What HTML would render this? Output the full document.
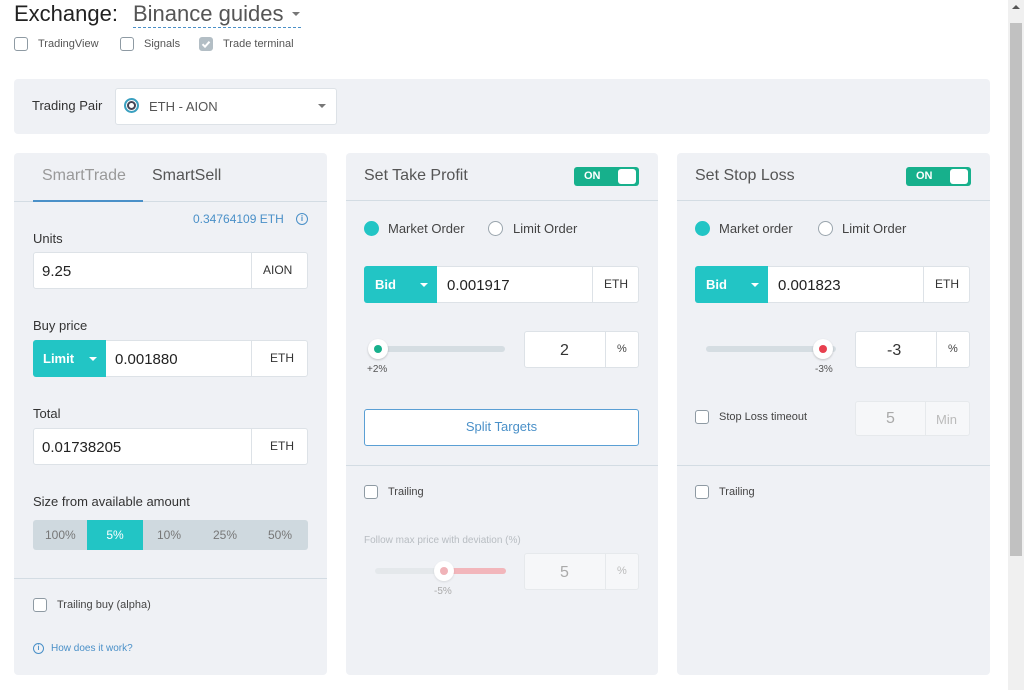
<!DOCTYPE html>
<html><head><meta charset="utf-8"><style>
*{box-sizing:border-box;margin:0;padding:0}
body{width:1024px;height:690px;background:#fff;font-family:"Liberation Sans",sans-serif;color:#444;position:relative;overflow:hidden}
.a{position:absolute}
.panel{position:absolute;background:#eff1f5;border-radius:4px}
.sep{position:absolute;height:1px;background:#d3dce3}
.inp{position:absolute;background:#fff;border:1px solid #dde2e7;border-radius:3px}
.dv{position:absolute;top:0;bottom:0;width:1px;background:#dde2e7}
.t{position:absolute;white-space:nowrap}
.cb{position:absolute;width:14px;height:14px;border:1px solid #8e9aa3;border-radius:3px;background:#fff}
.rf{position:absolute;width:15px;height:15px;border-radius:50%;background:#22c5c5}
.re{position:absolute;width:15px;height:15px;border-radius:50%;border:1px solid #9aa5ad;background:#fff}
.teal{position:absolute;background:#22c5c5;border-radius:3px 0 0 3px;color:#fff;font-size:13px;font-weight:bold}
.car{position:absolute;width:0;height:0;border-left:4px solid transparent;border-right:4px solid transparent;border-top:4px solid #fff}
.tog{position:absolute;width:65px;height:19px;background:#17b08c;border-radius:3px}
.tog span{position:absolute;left:10px;top:3px;color:#fff;font-size:11px;font-weight:bold}
.tog i{position:absolute;right:3px;top:2px;width:18px;height:15px;background:#fff;border-radius:3px}
.v{top:10px!important}
</style></head><body>

<div class="t" style="left:14px;top:1px;font-size:22px;color:#222">Exchange:</div>
<div class="t" style="left:133px;top:1px;font-size:22px;color:#555">Binance guides</div>
<div class="car" style="left:292px;top:12px;border-top-color:#777"></div>
<div class="a" style="left:133px;top:27px;width:168px;border-top:1px dashed #4a90c8"></div>

<div class="cb" style="left:14px;top:37px"></div><div class="t" style="left:38px;top:38px;font-size:11px;color:#555">TradingView</div>
<div class="cb" style="left:120px;top:37px"></div><div class="t" style="left:144px;top:38px;font-size:11px;color:#555">Signals</div>
<div class="cb" style="left:199px;top:37px;background:#b3bec5;border-color:#b3bec5"><svg width="14" height="14" style="position:absolute;left:-1px;top:-1px"><path d="M3.5 7.2l2.5 2.5 4.5-5" stroke="#fff" stroke-width="2" fill="none"/></svg></div>
<div class="t" style="left:223px;top:38px;font-size:11px;color:#555">Trade terminal</div>

<div class="panel" style="left:14px;top:79px;width:976px;height:55px"></div>
<div class="t" style="left:32px;top:98px;font-size:13px;color:#333">Trading Pair</div>
<div class="inp" style="left:115px;top:88px;width:222px;height:37px"></div>
<div class="a" style="left:124px;top:98px;width:15px;height:15px;border-radius:50%;border:2px solid #3aa0c0;box-shadow:inset 0 0 0 1px #fff,inset 0 0 0 3px #445"></div>
<div class="t" style="left:149px;top:99px;font-size:13px;color:#555">ETH - AION</div>
<div class="car" style="left:318px;top:104px;border-top-color:#777"></div>

<!-- LEFT -->
<div class="panel" style="left:14px;top:153px;width:313px;height:522px"></div>
<div class="t" style="left:42px;top:167px;font-size:16px;color:#999">SmartTrade</div>
<div class="t" style="left:152px;top:167px;font-size:16px;color:#555">SmartSell</div>
<div class="sep" style="left:14px;top:201px;width:313px"></div>
<div class="a" style="left:33px;top:200px;width:110px;height:2px;background:#4a90c8"></div>
<div class="t" style="left:193px;top:212px;font-size:12px;color:#4a90c8">0.34764109 ETH</div>
<div class="a" style="left:296px;top:213px;width:12px;height:12px;border:1.3px solid #4a90c8;border-radius:50%;font-size:8px;color:#4a90c8;text-align:center;line-height:10px;font-weight:bold">i</div>
<div class="t" style="left:33px;top:231px;font-size:13px;color:#333">Units</div>
<div class="inp" style="left:33px;top:252px;width:275px;height:37px"><div class="dv" style="left:217px"></div>
<div class="t v" style="left:8px;font-size:15px;color:#222">9.25</div><div class="t" style="left:229px;top:10px;font-size:12px;color:#333">AION</div></div>

<div class="t" style="left:33px;top:318px;font-size:13px;color:#333">Buy price</div>
<div class="inp" style="left:33px;top:340px;width:275px;height:37px"><div class="dv" style="left:217px"></div>
<div class="t v" style="left:81px;font-size:15px;color:#222">0.001880</div><div class="t" style="left:236px;top:10px;font-size:12px;color:#333">ETH</div></div>
<div class="teal" style="left:33px;top:340px;width:73px;height:37px"><span class="t" style="left:10px;top:11px">Limit</span><div class="car" style="left:56px;top:17px"></div></div>

<div class="t" style="left:33px;top:406px;font-size:13px;color:#333">Total</div>
<div class="inp" style="left:33px;top:428px;width:275px;height:37px"><div class="dv" style="left:217px"></div>
<div class="t v" style="left:8px;font-size:15px;color:#222">0.01738205</div><div class="t" style="left:236px;top:10px;font-size:12px;color:#333">ETH</div></div>

<div class="t" style="left:33px;top:494px;font-size:13px;color:#333">Size from available amount</div>
<div class="a" style="left:33px;top:520px;width:275px;height:30px;background:#cfd9df;border-radius:3px;font-size:12px;color:#777">
<span class="t" style="left:12px;top:8px">100%</span>
<span class="a" style="left:54px;top:0;width:56px;height:30px;background:#22c5c5;color:#fff;text-align:center;line-height:30px">5%</span>
<span class="t" style="left:124px;top:8px">10%</span><span class="t" style="left:180px;top:8px">25%</span><span class="t" style="left:235px;top:8px">50%</span></div>
<div class="sep" style="left:14px;top:578px;width:313px"></div>
<div class="cb" style="left:33px;top:598px"></div><div class="t" style="left:57px;top:599px;font-size:11px;color:#444">Trailing buy (alpha)</div>
<div class="a" style="left:33px;top:643px;width:11px;height:11px;border:1.2px solid #4a90c8;border-radius:50%;font-size:7px;color:#4a90c8;text-align:center;line-height:9px;font-weight:bold">i</div>
<div class="t" style="left:51px;top:643px;font-size:10px;color:#4a90c8">How does it work?</div>

<!-- MIDDLE -->
<div class="panel" style="left:346px;top:153px;width:312px;height:522px"></div>
<div class="t" style="left:364px;top:167px;font-size:16px;color:#555">Set Take Profit</div>
<div class="tog" style="left:574px;top:167px"><span>ON</span><i></i></div>
<div class="sep" style="left:346px;top:200px;width:312px"></div>
<div class="rf" style="left:364px;top:221px"></div><div class="t" style="left:388px;top:221px;font-size:13px;color:#444">Market Order</div>
<div class="re" style="left:488px;top:221px"></div><div class="t" style="left:513px;top:221px;font-size:13px;color:#444">Limit Order</div>
<div class="inp" style="left:364px;top:266px;width:275px;height:37px"><div class="dv" style="left:227px"></div>
<div class="t v" style="left:82px;font-size:15px;color:#222">0.001917</div><div class="t" style="left:239px;top:10px;font-size:12px;color:#333">ETH</div></div>
<div class="teal" style="left:364px;top:266px;width:73px;height:37px"><span class="t" style="left:11px;top:11px">Bid</span><div class="car" style="left:56px;top:17px"></div></div>
<div class="a" style="left:372px;top:346px;width:133px;height:6px;border-radius:3px;background:#d5dde2"></div>
<div class="a" style="left:368px;top:339px;width:20px;height:20px;border-radius:50%;background:#fff;box-shadow:0 1px 2px rgba(0,0,0,.2)"><i class="a" style="left:6px;top:6px;width:8px;height:8px;border-radius:50%;background:#17b08c"></i></div>
<div class="t" style="left:367px;top:364px;font-size:10px;color:#555">+2%</div>
<div class="inp" style="left:524px;top:331px;width:115px;height:37px"><div class="dv" style="left:80px"></div>
<div class="t v" style="left:35px;font-size:16px;color:#333">2</div><div class="t" style="left:92px;top:11px;font-size:11px;color:#444">%</div></div>
<div class="a" style="left:364px;top:409px;width:275px;height:37px;border:1.5px solid #5a9fd4;border-radius:3px;background:#fff;color:#4a90c8;font-size:13px;text-align:center;line-height:34px">Split Targets</div>
<div class="sep" style="left:346px;top:465px;width:312px"></div>
<div class="cb" style="left:364px;top:485px"></div><div class="t" style="left:388px;top:486px;font-size:11px;color:#444">Trailing</div>
<div class="t" style="left:364px;top:535px;font-size:10px;color:#b8bdc2">Follow max price with deviation (%)</div>
<div class="a" style="left:375px;top:568px;width:70px;height:6px;border-radius:3px;background:#e4e8eb"></div>
<div class="a" style="left:444px;top:568px;width:62px;height:6px;border-radius:3px;background:#f2b6bb"></div>
<div class="a" style="left:434px;top:561px;width:20px;height:20px;border-radius:50%;background:#fff;box-shadow:0 1px 2px rgba(0,0,0,.1)"><i class="a" style="left:6px;top:6px;width:8px;height:8px;border-radius:50%;background:#f0b3b8"></i></div>
<div class="t" style="left:434px;top:586px;font-size:10px;color:#aaa">-5%</div>
<div class="inp" style="left:524px;top:553px;width:115px;height:37px;background:#f6f7f9;border-color:#e6e9ec"><div class="dv" style="left:80px;background:#e6e9ec"></div>
<div class="t v" style="left:35px;font-size:16px;color:#aaa">5</div><div class="t" style="left:92px;top:11px;font-size:11px;color:#bbb">%</div></div>

<!-- RIGHT -->
<div class="panel" style="left:677px;top:153px;width:313px;height:522px"></div>
<div class="t" style="left:695px;top:167px;font-size:16px;color:#555">Set Stop Loss</div>
<div class="tog" style="left:906px;top:167px"><span>ON</span><i></i></div>
<div class="sep" style="left:677px;top:200px;width:313px"></div>
<div class="rf" style="left:695px;top:221px"></div><div class="t" style="left:719px;top:221px;font-size:13px;color:#444">Market order</div>
<div class="re" style="left:818px;top:221px"></div><div class="t" style="left:842px;top:221px;font-size:13px;color:#444">Limit Order</div>
<div class="inp" style="left:695px;top:266px;width:275px;height:37px"><div class="dv" style="left:227px"></div>
<div class="t v" style="left:82px;font-size:15px;color:#222">0.001823</div><div class="t" style="left:239px;top:10px;font-size:12px;color:#333">ETH</div></div>
<div class="teal" style="left:695px;top:266px;width:73px;height:37px"><span class="t" style="left:11px;top:11px">Bid</span><div class="car" style="left:56px;top:17px"></div></div>
<div class="a" style="left:706px;top:346px;width:130px;height:6px;border-radius:3px;background:#d5dde2"></div>
<div class="a" style="left:813px;top:339px;width:20px;height:20px;border-radius:50%;background:#fff;box-shadow:0 1px 2px rgba(0,0,0,.2)"><i class="a" style="left:6px;top:6px;width:8px;height:8px;border-radius:50%;background:#e8404f"></i></div>
<div class="t" style="left:815px;top:364px;font-size:10px;color:#555">-3%</div>
<div class="inp" style="left:855px;top:331px;width:115px;height:37px"><div class="dv" style="left:80px"></div>
<div class="t v" style="left:31px;font-size:16px;color:#333">-3</div><div class="t" style="left:92px;top:11px;font-size:11px;color:#444">%</div></div>
<div class="cb" style="left:695px;top:410px"></div><div class="t" style="left:719px;top:411px;font-size:11px;color:#444">Stop Loss timeout</div>
<div class="inp" style="left:855px;top:401px;width:115px;height:35px;background:#f6f7f9;border-color:#e6e9ec"><div class="dv" style="left:69px;background:#e6e9ec"></div>
<div class="t" style="left:30px;top:8px;font-size:16px;color:#aaa">5</div><div class="t" style="left:80px;top:10px;font-size:13px;color:#bbb">Min</div></div>
<div class="sep" style="left:677px;top:465px;width:313px"></div>
<div class="cb" style="left:695px;top:485px"></div><div class="t" style="left:719px;top:486px;font-size:11px;color:#444">Trailing</div>

<!-- scrollbar -->
<div class="a" style="left:1008px;top:0;width:16px;height:690px;background:#f0f0f0"></div>
<div class="a" style="left:1012px;top:5px;width:0;height:0;border-left:4px solid transparent;border-right:4px solid transparent;border-bottom:4px solid #555"></div>
<div class="a" style="left:1010px;top:23px;width:12px;height:533px;background:#c1c1c1"></div>
</body></html>
